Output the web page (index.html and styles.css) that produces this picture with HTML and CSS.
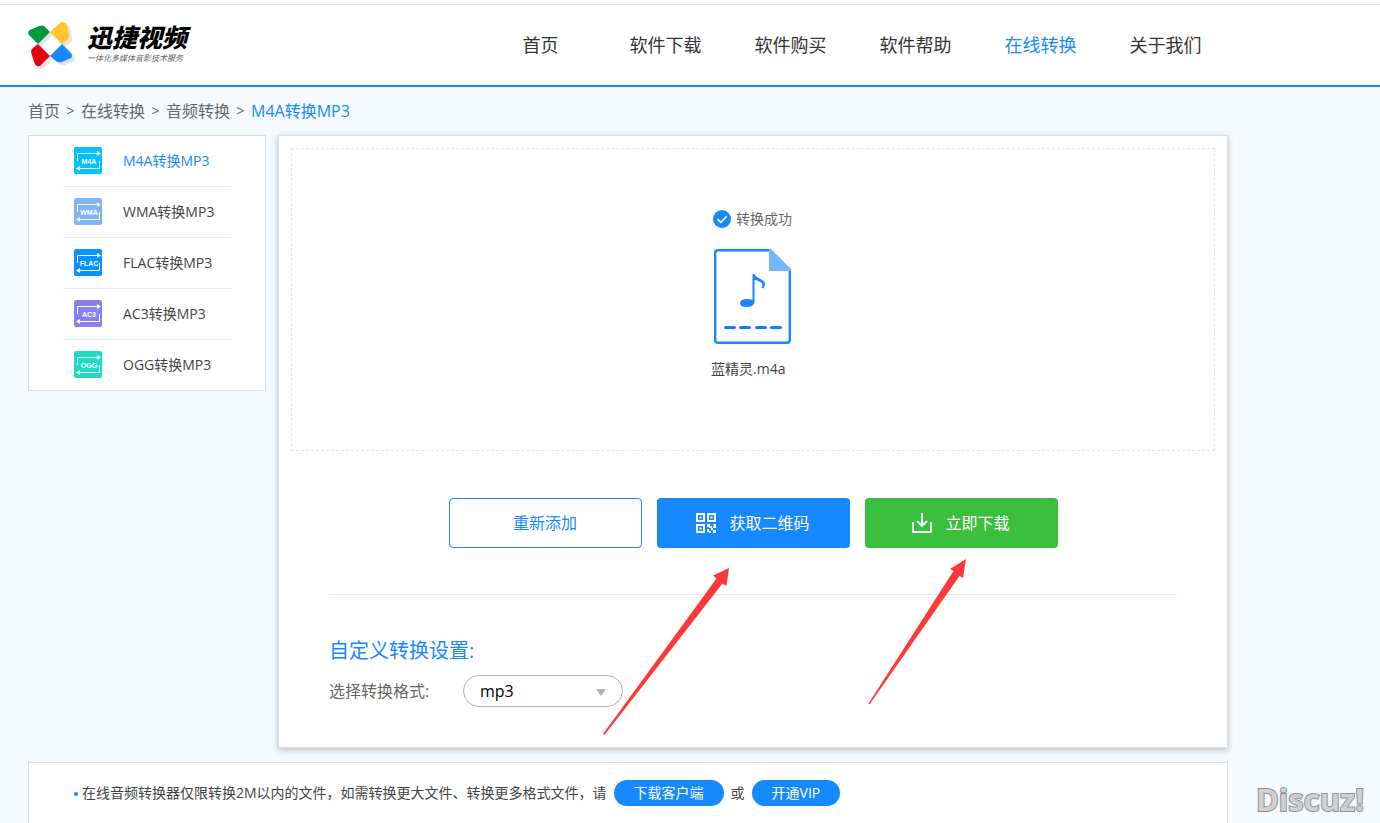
FILE: index.html
```html
<!DOCTYPE html>
<html lang="zh-CN">
<head>
<meta charset="utf-8">
<title>M4A转换MP3 - 迅捷视频</title>
<link rel="stylesheet" href="styles.css">
</head>
<body>
<header class="site-header">
  <div class="container header-inner">
    <a class="logo" href="#">
      <svg class="logo-mark" width="47" height="48" viewBox="0 0 47 48" aria-hidden="true">
        <g fill="#e4e4e6" transform="translate(3 4)">
          <path d="M0 11 Q0 9 2 8 L11 4 Q14 3 16 4 L22 10 L10 22 L1 13 Z"/>
          <path d="M22 10 L32 1 Q34 -1 37 1 Q39 2 40 6 L41 14 Q41 17 39 18 L34 22 Z"/>
          <path d="M10 22 L22 34 L14 42 Q12 45 9 44 Q7 43 6 40 L3 30 Q3 27 5 26 Z"/>
          <path d="M34 22 L43 31 Q45 34 43 36 L34 40 Q30 41 28 39 L22 34 Z"/>
        </g>
        <g transform="translate(0 1)">
          <path fill="#009a3d" d="M0 11 Q0 9 2 8 L11 4 Q14 3 16 4 L22 10 L10 22 L1 13 Z"/>
          <path fill="#ffc72e" d="M22 10 L32 1 Q34 -1 37 1 Q39 2 40 6 L41 14 Q41 17 39 18 L34 22 Z"/>
          <path fill="#e60012" d="M10 22 L22 34 L14 42 Q12 45 9 44 Q7 43 6 40 L3 30 Q3 27 5 26 Z"/>
          <path fill="#1388ff" d="M34 22 L43 31 Q45 34 43 36 L34 40 Q30 41 28 39 L22 34 Z"/>
        </g>
      </svg>
      <span class="logo-text">
        <strong class="logo-name">迅捷视频</strong>
        <span class="logo-slogan">一体化多媒体音影技术服务</span>
      </span>
    </a>
    <nav class="main-nav">
      <a href="#">首页</a>
      <a href="#">软件下载</a>
      <a href="#">软件购买</a>
      <a href="#">软件帮助</a>
      <a href="#" class="active">在线转换</a>
      <a href="#">关于我们</a>
    </nav>
  </div>
</header>

<div class="container page">
  <nav class="breadcrumb">
    <a href="#">首页</a><span class="sep">&gt;</span><a href="#">在线转换</a><span class="sep">&gt;</span><a href="#">音频转换</a><span class="sep">&gt;</span><a href="#" class="active">M4A转换MP3</a>
  </nav>

  <div class="columns">
    <aside class="sidebar">
      <a class="side-item active" href="#">
        <svg class="fmt" width="28" height="27" viewBox="0 0 28 27"><rect width="28" height="27" rx="2" fill="#00c4ff"/><path class="fmt-line" d="M3.500 14V6.500H24M25.500 14V21.500H5"/><path class="fmt-head" d="M23 4L27 6.500L23 9ZM6 19L2 21.500L6 24Z"/><text x="15" y="17">M4A</text></svg>
        <span>M4A转换MP3</span>
      </a>
      <a class="side-item" href="#">
        <svg class="fmt" width="28" height="27" viewBox="0 0 28 27"><rect width="28" height="27" rx="2" fill="#80b5f5"/><path class="fmt-line" d="M3.500 14V6.500H24M25.500 14V21.500H5"/><path class="fmt-head" d="M23 4L27 6.500L23 9ZM6 19L2 21.500L6 24Z"/><text x="15" y="17">WMA</text></svg>
        <span>WMA转换MP3</span>
      </a>
      <a class="side-item" href="#">
        <svg class="fmt" width="28" height="27" viewBox="0 0 28 27"><rect width="28" height="27" rx="2" fill="#0893ff"/><path class="fmt-line" d="M3.500 14V6.500H24M25.500 14V21.500H5"/><path class="fmt-head" d="M23 4L27 6.500L23 9ZM6 19L2 21.500L6 24Z"/><text x="15" y="17">FLAC</text></svg>
        <span>FLAC转换MP3</span>
      </a>
      <a class="side-item" href="#">
        <svg class="fmt" width="28" height="27" viewBox="0 0 28 27"><rect width="28" height="27" rx="2" fill="#8b80f3"/><path class="fmt-line" d="M3.500 14V6.500H24M25.500 14V21.500H5"/><path class="fmt-head" d="M23 4L27 6.500L23 9ZM6 19L2 21.500L6 24Z"/><text x="15" y="17">AC3</text></svg>
        <span>AC3转换MP3</span>
      </a>
      <a class="side-item" href="#">
        <svg class="fmt" width="28" height="27" viewBox="0 0 28 27"><rect width="28" height="27" rx="2" fill="#1cdcc8"/><path class="fmt-line" d="M3.500 14V6.500H24M25.500 14V21.500H5"/><path class="fmt-head" d="M23 4L27 6.500L23 9ZM6 19L2 21.500L6 24Z"/><text x="15" y="17">OGG</text></svg>
        <span>OGG转换MP3</span>
      </a>
    </aside>

    <main class="panel">
      <section class="dropzone">
        <div class="file">
          <p class="file-status">
            <svg width="18" height="18" viewBox="0 0 18 18" aria-hidden="true"><circle cx="9" cy="9" r="9" fill="#1689ff"/><path d="M4.500 9.200L7.800 12.300L13.600 6.400" fill="none" stroke="#fff" stroke-width="1.600"/></svg>
            <span>转换成功</span>
          </p>
          <svg class="file-icon" width="77" height="95" viewBox="0 0 77 95" aria-hidden="true">
            <path d="M56 1.200H4Q1.200 1.200 1.200 4V91Q1.200 93.800 4 93.800H73Q75.800 93.800 75.800 91V20" fill="#fff" stroke="#1689ff" stroke-width="2.400"/>
            <path d="M55 0H57L77 20V22H55Z" fill="#74b7ff"/>
            <path d="M38.500 25H40.500C41 29 51 30 51 35Q51 37 49.500 39.500L47.500 38.500Q49 36 48 34.500Q46 32 40.500 31V53Q40 58 32.500 58Q26 58 26 54Q26.500 50 33 50Q37 50 38.500 51Z" fill="#1689ff"/>
            <path d="M11.500 78.500H20.500M26.500 78.500H35.500M42.500 78.500H51.500M57.500 78.500H66.500" stroke="#1080ff" stroke-width="3" stroke-linecap="round"/>
          </svg>
          <p class="file-name">蓝精灵.m4a</p>
        </div>
      </section>

      <div class="actions">
        <button type="button" class="btn btn-outline">重新添加</button>
        <button type="button" class="btn btn-blue">
          <svg width="20" height="20" viewBox="0 0 20 20" aria-hidden="true">
            <g fill="none" stroke="#fff" stroke-width="2"><path d="M1 1H8V8H1ZM12 1H19V8H12ZM1 12H8V19H1Z"/></g>
            <path fill="#fff" d="M3.500 3.500h2v2h-2zM14.500 3.500h2v2h-2zM3.500 14.500h2v2h-2zM11 11h3v2h2v2h-3v-1h-2zM17 11h3v4h-3v-2h1v-1h-1zM11 16h2v2h2v2h-2v-1h-2zM15 15h2v2h-2zM17 17h3v3h-3z"/>
          </svg>
          <span>获取二维码</span>
        </button>
        <button type="button" class="btn btn-green">
          <svg width="20" height="20" viewBox="0 0 20 20" fill="none" stroke="#fff" stroke-width="1.800" aria-hidden="true"><path d="M10 0V13M5 8L10 13L15 8M1 9V19H19V9"/></svg>
          <span>立即下载</span>
        </button>
      </div>

      <section class="settings">
        <h2>自定义转换设置:</h2>
        <div class="field">
          <label for="format">选择转换格式:</label>
          <div class="select-wrap">
            <select id="format">
              <option>mp3</option>
              <option>wav</option>
              <option>wma</option>
            </select>
            <svg class="caret" width="10" height="7" viewBox="0 0 10 7" aria-hidden="true"><path d="M0 0H10L5 7Z" fill="#b2b2b2"/></svg>
          </div>
        </div>
      </section>

      <svg class="pointers" width="948" height="611" viewBox="279 136 948 611" aria-hidden="true">
        <path fill="#fd3a38" d="M603 734L716.500 578.500L713 575.500L729 568L726.500 586L722.500 583.500L604.500 735Z"/>
        <path fill="#fd3a38" d="M868.500 703.500L953.500 571L950 569L966 559L963 578L959.500 576L869.500 704.500Z"/>
      </svg>
    </main>
  </div>

  <section class="notice">
    <span class="dot"></span>
    <span class="notice-text">在线音频转换器仅限转换2M以内的文件，如需转换更大文件、转换更多格式文件，请</span>
    <a class="pill" href="#">下载客户端</a>
    <span>或</span>
    <a class="pill" href="#">开通VIP</a>
  </section>
</div>

<div class="watermark">Discuz!</div>
</body>
</html>
```

FILE: styles.css
```css
* {
  box-sizing: border-box;
}

body {
  margin: 0;
  min-height: 100vh;
  display: flex;
  flex-direction: column;
  position: relative;
  background: #f5faff;
  color: #444;
  font: 400 14px/20px "Open Sans", "Noto Sans CJK SC", sans-serif;
}

a {
  color: inherit;
  text-decoration: none;
}

p,
h2 {
  margin: 0;
  font-weight: inherit;
}

svg {
  display: block;
  flex: none;
}

.container {
  width: 100%;
  max-width: 1228px;
  padding-left: 28px;
}

/* Header */
.site-header {
  margin-top: 4px;
  background: #fff;
  border-top: 1px solid #ddd;
  border-bottom: 2px solid #1689ff;
  box-shadow: 0 -4px 0 #fff;
}

.header-inner {
  display: flex;
  justify-content: space-between;
  align-items: center;
  height: 80px;
}

.logo {
  display: flex;
  align-items: center;
  gap: 12px;
  color: #000;
}

.logo-text {
  display: flex;
  flex-direction: column;
}

.logo-name {
  font-size: 25px;
  font-weight: 900;
  font-style: italic;
  line-height: 26px;
}

.logo-slogan {
  font-size: 8px;
  font-style: italic;
  line-height: 16px;
  color: #666;
}

.main-nav {
  display: flex;
}

.main-nav a {
  width: 125px;
  text-align: center;
  font-size: 18px;
  line-height: 80px;
  color: #333;
}

.main-nav .active,
.breadcrumb .active,
.side-item.active {
  color: #1689ff;
}

/* Page body */
.page {
  flex: 1;
  display: flex;
  flex-direction: column;
}

.breadcrumb {
  display: flex;
  font-size: 16px;
  line-height: 48px;
  color: #666;
}

.sep {
  width: 21px;
  text-align: center;
  font-size: 14px;
}

.columns {
  display: flex;
  align-items: flex-start;
  gap: 12px;
}

.sidebar {
  flex: none;
  width: 238px;
  padding: 0 34px;
  background: #fff;
  border: 1px solid #ddd;
}

.side-item {
  display: flex;
  align-items: center;
  gap: 21px;
  height: 51px;
  padding: 0 0 1px 11px;
  border-bottom: 1px solid #e8e8e8;
}

.side-item:last-child {
  height: 50px;
  border-bottom: 0;
}

.fmt text {
  fill: #fff;
  font: 700 7px "Liberation Sans", sans-serif;
  text-anchor: middle;
}

.fmt-line {
  fill: none;
  stroke: #fff;
}

.fmt-head {
  fill: #fff;
}

.panel {
  position: relative;
  flex: 1;
  padding: 12px 12px 40px;
  background: #fff;
  border: 1px solid #ddd;
  box-shadow: 0 2px 6px rgba(0, 0, 0, 0.25);
}

.dropzone {
  display: flex;
  justify-content: center;
  padding: 60px 0 71px;
  border: 1px dashed #e5e5e5;
}

.file {
  width: 84px;
}

.file-status {
  display: flex;
  align-items: center;
  gap: 5px;
  padding-left: 2px;
  white-space: nowrap;
  color: #666;
}

.file-icon {
  margin: 20px 3px 15px;
}

.actions {
  display: flex;
  justify-content: center;
  gap: 15px;
  margin: 0 38px;
  padding: 47px 0 46px;
  border-bottom: 1px solid #e8e8e8;
}

.btn {
  display: flex;
  align-items: center;
  justify-content: center;
  gap: 13px;
  width: 193px;
  height: 50px;
  padding: 0;
  border: 0;
  border-radius: 4px;
  color: #fff;
  font: inherit;
  font-size: 16px;
}

.btn-outline {
  background: #fff;
  border: 1px solid #1689ff;
  color: #1689ff;
}

.btn-blue {
  background: #1689ff;
}

.btn-green {
  background: #3bbf3f;
}

.settings {
  padding: 40px 38px 0;
}

.settings h2 {
  font-size: 20px;
  line-height: 32px;
  color: #1689ff;
}

.field {
  display: flex;
  align-items: center;
  margin-top: 8px;
}

.field label {
  width: 134px;
  font-size: 16px;
  color: #666;
}

.select-wrap {
  position: relative;
}

.select-wrap select {
  appearance: none;
  display: block;
  width: 160px;
  height: 32px;
  padding: 0 16px;
  border: 1px solid #b2b2b2;
  border-radius: 16px;
  background: #fff;
  color: #000;
  font: 400 16px "Open Sans", sans-serif;
}

.caret {
  position: absolute;
  top: 14px;
  right: 17px;
  pointer-events: none;
}

.pointers {
  position: absolute;
  top: 0;
  left: 0;
  pointer-events: none;
}

/* Notice */
.notice {
  flex: 1;
  display: flex;
  align-items: flex-start;
  gap: 7px;
  margin-top: 14px;
  padding: 17px 45px 0;
  background: #fff;
  border: 1px solid #ddd;
  border-bottom: 0;
  line-height: 26px;
}

.dot {
  width: 4px;
  height: 4px;
  margin: 12px -3px 0 0;
  border-radius: 50%;
  background: #1689ff;
}

.pill {
  padding: 0 20px;
  border-radius: 13px;
  background: #1689ff;
  color: #fff;
}

.watermark {
  position: absolute;
  right: 16px;
  bottom: 4px;
  font-size: 31px;
  font-weight: 700;
  line-height: 40px;
  color: #d0d0d0;
  -webkit-text-stroke: 2px #909396;
  paint-order: stroke;
}
```
